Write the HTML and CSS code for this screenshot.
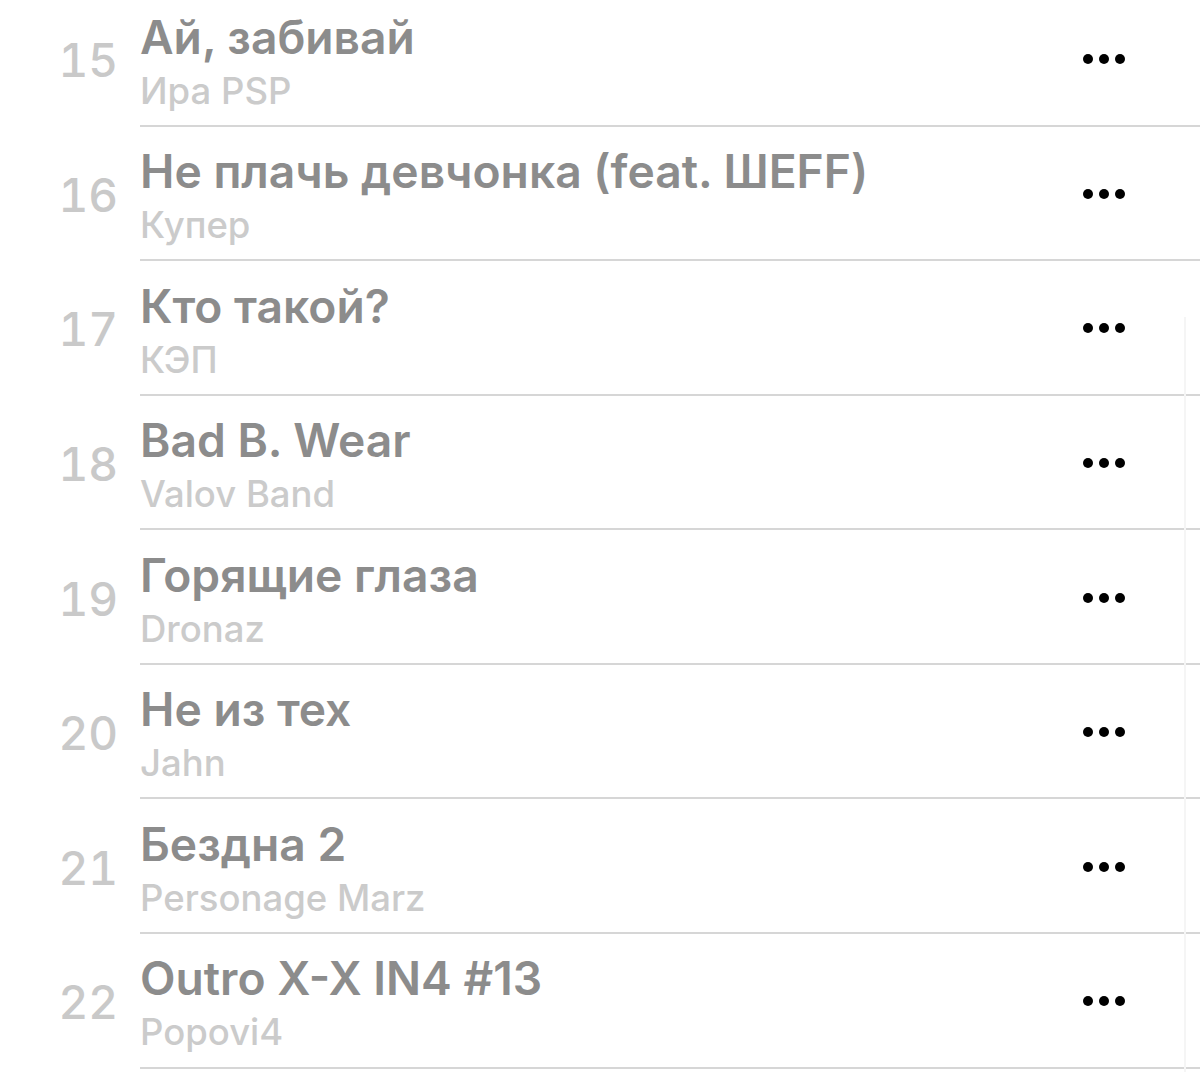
FILE: index.html
```html
<!DOCTYPE html>
<html lang="ru">
<head>
<meta charset="utf-8">
<title>Треки</title>
<link rel="stylesheet" href="styles.css">
</head>
<body>
<div class="list">
  <div class="row"><div class="num">15</div><div class="body"><div class="text"><div class="title">Ай, забивай</div><div class="artist">Ира PSP</div></div><div class="more"><span></span><span></span><span></span></div></div></div>
  <div class="row"><div class="num">16</div><div class="body"><div class="text"><div class="title">Не плачь девчонка (feat. ШEFF)</div><div class="artist">Купер</div></div><div class="more"><span></span><span></span><span></span></div></div></div>
  <div class="row"><div class="num">17</div><div class="body"><div class="text"><div class="title">Кто такой?</div><div class="artist">КЭП</div></div><div class="more"><span></span><span></span><span></span></div></div></div>
  <div class="row"><div class="num">18</div><div class="body"><div class="text"><div class="title">Bad B. Wear</div><div class="artist">Valov Band</div></div><div class="more"><span></span><span></span><span></span></div></div></div>
  <div class="row"><div class="num">19</div><div class="body"><div class="text"><div class="title">Горящие глаза</div><div class="artist">Dronaz</div></div><div class="more"><span></span><span></span><span></span></div></div></div>
  <div class="row"><div class="num">20</div><div class="body"><div class="text"><div class="title">Не из тех</div><div class="artist">Jahn</div></div><div class="more"><span></span><span></span><span></span></div></div></div>
  <div class="row"><div class="num">21</div><div class="body"><div class="text"><div class="title">Бездна 2</div><div class="artist">Personage Marz</div></div><div class="more"><span></span><span></span><span></span></div></div></div>
  <div class="row"><div class="num">22</div><div class="body"><div class="text"><div class="title">Outro X-X IN4 #13</div><div class="artist">Popovi4</div></div><div class="more"><span></span><span></span><span></span></div></div></div>
</div>
<div class="scroll-indicator"></div>
</body>
</html>
```

FILE: styles.css
```css
html, body {
  margin: 0;
  padding: 0;
  background: #ffffff;
  overflow: hidden;
}

body {
  font-family: Inter, "Noto Sans", "Liberation Sans", sans-serif;
  height: 1072px;
  position: relative;
}

.list {
  margin-top: -8px;
}

.row {
  display: flex;
  height: 134.57px;
  box-sizing: border-box;
}

.num {
  width: 118px;
  flex: none;
  display: flex;
  align-items: center;
  justify-content: flex-end;
  box-sizing: border-box;
  font-size: 46px;
  font-weight: 500;
  font-variant-numeric: tabular-nums;
  color: #c9c9c9;
  padding-top: 2px;
}

.body {
  flex: 1;
  margin-left: 22px;
  display: flex;
  align-items: center;
  border-bottom: 2px solid #d6d6d6;
  box-sizing: border-box;
}

.text {
  flex: 1;
  align-self: flex-start;
  padding-top: 18.5px;
  min-width: 0;
}

.title {
  font-size: 46.2px;
  line-height: 52px;
  font-weight: 600;
  color: #8c8c8c;
  white-space: nowrap;
}

.artist {
  font-size: 36.5px;
  line-height: 56px;
  font-weight: 500;
  color: #cbcbcb;
  white-space: nowrap;
}

.more {
  display: flex;
  gap: 6px;
  margin-right: 75px;
  padding-top: 2px;
}

.more span {
  width: 10px;
  height: 10px;
  border-radius: 50%;
  background: #000;
}

.scroll-indicator {
  position: absolute;
  left: 1184px;
  top: 317px;
  width: 2px;
  height: 760px;
  background: #f5f5f5;
}
```
